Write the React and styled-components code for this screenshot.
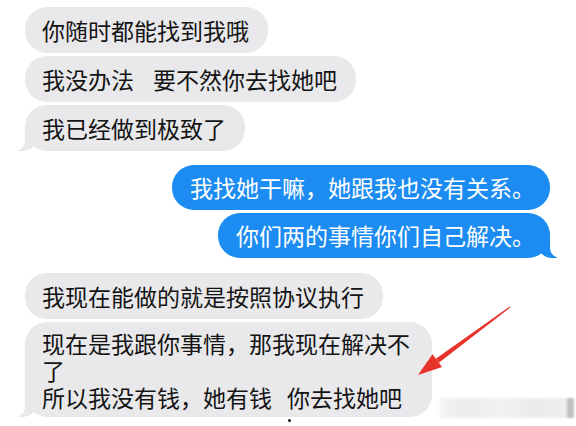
import React from 'react';
import styled, { createGlobalStyle, css } from 'styled-components';

const GlobalStyles = createGlobalStyle`
  body {
    margin: 0;
    padding: 0;
    background: #ffffff;
    font-family: "Noto Sans CJK SC", "Noto Sans", sans-serif;
  }
`;

const GRAY = '#e9e9eb';
const BLUE = '#1c8cf2';

const Page = styled.div`
  position: relative;
  width: 576px;
  height: 426px;
  overflow: hidden;
  background: #ffffff;
`;

const Thread = styled.div`
  display: flex;
  flex-direction: column;
  padding: 7px 26px 0 25px;
`;

const Group = styled.div`
  display: flex;
  flex-direction: column;
  align-items: ${p => (p.$mine ? 'flex-end' : 'flex-start')};
  gap: 3px;
  margin-top: ${p => p.$top || 0}px;
`;

const leftTail = css`
  &::before {
    content: '';
    position: absolute;
    bottom: 0;
    left: -7px;
    width: 20px;
    height: 20px;
    background: ${GRAY};
    border-bottom-right-radius: 15px;
  }
  &::after {
    content: '';
    position: absolute;
    bottom: 0;
    left: -10px;
    width: 10px;
    height: 20px;
    background: #ffffff;
    border-bottom-right-radius: 10px;
  }
`;

const rightTail = css`
  &::before {
    content: '';
    position: absolute;
    bottom: 0;
    right: -7px;
    width: 20px;
    height: 20px;
    background: ${BLUE};
    border-bottom-left-radius: 15px;
  }
  &::after {
    content: '';
    position: absolute;
    bottom: 0;
    right: -10px;
    width: 10px;
    height: 20px;
    background: #ffffff;
    border-bottom-left-radius: 10px;
  }
`;

const Bubble = styled.div`
  position: relative;
  font-size: 23px;
  line-height: ${p => (p.$mine ? 27 : 28)}px;
  padding: 9px 19px 9px 17px;
  border-radius: 22px;
  white-space: nowrap;
  background: ${p => (p.$mine ? BLUE : GRAY)};
  color: ${p => (p.$mine ? '#ffffff' : '#141414')};
  ${p => p.$mine && css`padding: 9px 15px 9px 18px;`}
  ${p => p.$multi && css`
    line-height: 27px;
    padding: 8px 22px 6px 17px;
  `}
  & > * { position: relative; z-index: 1; }
  ${p => p.$tail && (p.$mine ? rightTail : leftTail)}
`;

const Line = styled.div`
  height: 27px;
`;

const Space = styled.span`
  display: inline-block;
  width: ${p => p.$w || 19}px;
`;

const Arrow = styled.svg`
  position: absolute;
  left: 410px;
  top: 300px;
  width: 110px;
  height: 85px;
`;

const Watermark = styled.div`
  position: absolute;
  left: 440px;
  top: 398px;
  width: 134px;
  height: 20px;
  background: linear-gradient(
    90deg,
    #f4f4f4 0%,
    #ececec 20%,
    #f2f2f2 45%,
    #ebebeb 70%,
    #efefef 94%,
    #b9b9b9 96%,
    #c4c4c4 100%
  );
  filter: blur(1px);
`;

const Dot = styled.span`
  position: absolute;
  left: 288px;
  top: 419px;
  width: 3px;
  height: 3px;
  border-radius: 50%;
  background: #111111;
`;

const App = () => {
  return (
    <Page>
      <GlobalStyles />
      <Thread>
        <Group>
          <Bubble><span>你随时都能找到我哦</span></Bubble>
          <Bubble><span>我没办法<Space />要不然你去找她吧</span></Bubble>
          <Bubble $tail><span>我已经做到极致了</span></Bubble>
        </Group>

        <Group $mine $top={14}>
          <Bubble $mine><span>我找她干嘛，她跟我也没有关系。</span></Bubble>
          <Bubble $mine $tail><span>你们两的事情你们自己解决。</span></Bubble>
        </Group>

        <Group $top={15}>
          <Bubble><span>我现在能做的就是按照协议执行</span></Bubble>
          <Bubble $multi $tail>
            <div>
              <Line>现在是我跟你事情，那我现在解决不</Line>
              <Line>了</Line>
              <Line>所以我没有钱，她有钱<Space $w={15} />你去找她吧</Line>
            </div>
          </Bubble>
        </Group>
      </Thread>

      <Arrow viewBox="0 0 110 85">
        <polygon points="100.3,7.4 99.7,6.6 25.8,58.7 28.8,62.7" fill="#e8332b" />
        <polygon points="8,75 32.1,67.1 22.5,54.3" fill="#e8332b" />
      </Arrow>
      <Watermark />
      <Dot />
    </Page>
  );
};

export default App;
